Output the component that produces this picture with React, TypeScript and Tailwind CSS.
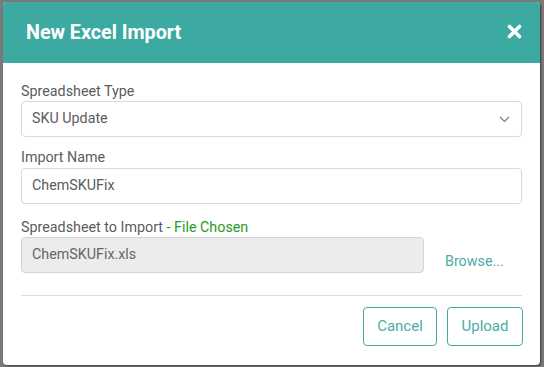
import React from "react";

export default function App() {
  return (
    <div
      className="w-[544px] h-[367px] bg-[#7a7a7a] pl-[3px] pt-[2px] overflow-hidden"
      style={{ fontFamily: "Roboto, 'Liberation Sans', sans-serif" }}
    >
      <div className="w-[537px] h-[363px] bg-white rounded-[4px] overflow-hidden shadow-[1px_1px_2px_rgba(0,0,0,0.5)] flex flex-col">
        <div className="h-[61px] bg-[#3daaa1] flex items-center justify-between pl-[23px] pr-[16px] shrink-0">
          <div className="text-white font-bold text-[19.7px] leading-none pt-[1px]">New Excel Import</div>
          <svg width="15" height="15" viewBox="0 0 15 15" className="mr-[2px] mb-[3px]">
            <path d="M2.5 2.5 L12.5 12.5 M12.5 2.5 L2.5 12.5" stroke="white" strokeWidth="3.6" strokeLinecap="round" />
          </svg>
        </div>
        <div className="px-[18px] pt-[18px] flex flex-col text-[14.3px] text-[#5c5c5c]">
          <div className="leading-[20px]">Spreadsheet Type</div>
          <div className="h-[36px] border border-[#d9d9d9] rounded-[4px] flex items-center justify-between pl-[10px] pr-[11px]">
            <span>SKU Update</span>
            <svg width="11" height="7" viewBox="0 0 11 7">
              <path d="M1 1 L5.5 5.5 L10 1" stroke="#777" strokeWidth="1.1" fill="none" />
            </svg>
          </div>
          <div className="leading-[20px] mt-[10px]">Import Name</div>
          <div className="h-[36px] border border-[#d9d9d9] rounded-[4px] flex items-center pl-[10px] mt-[1px]">
            <span>ChemSKUFix</span>
          </div>
          <div className="leading-[20px] mt-[13px]">
            Spreadsheet to Import <span className="text-[#279b27]">- File Chosen</span>
          </div>
          <div className="flex items-end">
            <div className="w-[403px] h-[36px] bg-[#ececec] border border-[#d4d4d4] rounded-[4px] flex items-center pl-[10px] text-[#666]">
              ChemSKUFix.xls
            </div>
            <div className="ml-[21px] text-[#4aada5] leading-[20px] mb-[2px]">Browse...</div>
          </div>
          <div className="h-px bg-[#dcdcdc] mt-[22px]" />
          <div className="flex justify-end gap-[10px] mt-[11px]">
            <button className="w-[74px] h-[39px] border border-[#42aaa2] rounded-[4px] text-[#4aada5] text-[15px]">
              Cancel
            </button>
            <button className="w-[76px] h-[39px] border border-[#42aaa2] rounded-[4px] text-[#4aada5] text-[15px] mr-[-1px]">
              Upload
            </button>
          </div>
        </div>
      </div>
    </div>
  );
}
